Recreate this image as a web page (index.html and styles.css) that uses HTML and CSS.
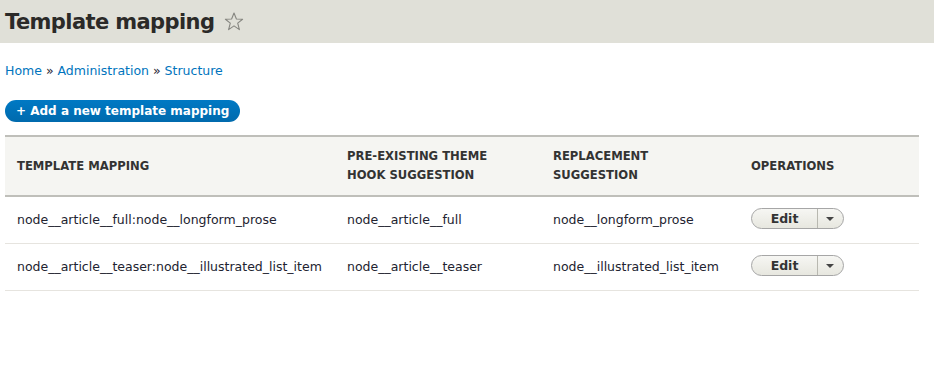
FILE: index.html
```html
<!DOCTYPE html>
<html lang="en">
<head>
    <meta charset="UTF-8">
    <title>Template mapping</title>
    <link rel="stylesheet" href="styles.css">
</head>
<body>
    <div class="page-header">
        <h1>Template mapping <span class="star">
            <svg width="20" height="19" viewBox="0 0 20 19"><polygon points="10,1 12.4,7 18.6,7.2 13.7,11.1 15.4,17.6 10,13.9 4.6,17.6 6.3,11.1 1.4,7.2 7.6,7" fill="none" stroke="#868680" stroke-width="1.1" stroke-linejoin="round"/></svg>
        </span></h1>
    </div>
    <div class="content">
        <div class="breadcrumb">
            <a href="#">Home</a> » <a href="#">Administration</a> » <a href="#">Structure</a>
        </div>
        <a class="action-button" href="#">+ Add a new template mapping</a>
        <table class="mapping-table">
            <thead>
                <tr>
                    <th class="col-1">Template mapping</th>
                    <th class="col-2">Pre-existing theme hook suggestion</th>
                    <th class="col-3">Replacement suggestion</th>
                    <th>Operations</th>
                </tr>
            </thead>
            <tbody>
                <tr>
                    <td>node__article__full:node__longform_prose</td>
                    <td>node__article__full</td>
                    <td>node__longform_prose</td>
                    <td>
                        <div class="dropbutton"><span class="main">Edit</span><span class="toggle"></span></div>
                    </td>
                </tr>
                <tr>
                    <td>node__article__teaser:node__illustrated_list_item</td>
                    <td>node__article__teaser</td>
                    <td>node__illustrated_list_item</td>
                    <td>
                        <div class="dropbutton"><span class="main">Edit</span><span class="toggle"></span></div>
                    </td>
                </tr>
            </tbody>
        </table>
    </div>
</body>
</html>
```

FILE: styles.css
```css
body {
    margin: 0;
    font-family: "DejaVu Sans", "Lucida Grande", sans-serif;
    font-size: 12.5px;
    color: #222330;
    background: #fff;
}
.page-header {
    background-color: #e0e0d8;
    height: 43px;
    padding: 0 5px;
    box-sizing: border-box;
}
.page-header h1 {
    margin: 0;
    font-size: 21px;
    letter-spacing: -0.6px;
    line-height: 45px;
    font-weight: bold;
    color: #2b2a28;
}
.star {
    display: inline-block;
    vertical-align: -2px;
    margin-left: 3px;
}
.content {
    padding: 0 5px;
}
.breadcrumb {
    margin-top: 20px;
    line-height: 16px;
    color: #222330;
}
.breadcrumb a {
    color: #0074bd;
    text-decoration: none;
}
.action-button {
    display: inline-block;
    margin-top: 21px;
    height: 22px;
    line-height: 22px;
    padding: 0 11px;
    border-radius: 11px;
    background: linear-gradient(#0079c4, #006aad);
    color: #fff;
    font-size: 12px;
    font-weight: bold;
    text-decoration: none;
    box-sizing: border-box;
}
.mapping-table {
    width: 914px;
    table-layout: fixed;
    border-collapse: collapse;
    margin-top: 13px;
}
.mapping-table th {
    background-color: #f5f5f2;
    border-top: 2px solid #bfbfba;
    border-bottom: 2px solid #bfbfba;
    text-align: left;
    text-transform: uppercase;
    font-size: 11.6px;
    font-weight: bold;
    line-height: 19px;
    padding: 5px 12px;
    height: 60px;
    box-sizing: border-box;
    color: #333;
}
.mapping-table th.col-1 {
    width: 330px;
}
.mapping-table th.col-2 {
    width: 206px;
}
.mapping-table th.col-3 {
    width: 198px;
}
.mapping-table td {
    padding: 0 12px;
    height: 47px;
    box-sizing: border-box;
    border-bottom: 1px solid #e6e4df;
    white-space: nowrap;
}
.dropbutton {
    display: inline-flex;
    height: 21px;
    margin-top: -4px;
    border: 1px solid #a6a6a6;
    border-radius: 11px;
    background: linear-gradient(#f6f6f3, #e7e7df);
    box-sizing: border-box;
    font-weight: bold;
    font-size: 12.5px;
    color: #333;
}
.dropbutton .main {
    width: 65px;
    text-align: center;
    line-height: 19px;
    border-right: 1px solid #b8b8b0;
}
.dropbutton .toggle {
    width: 25px;
    position: relative;
}
.dropbutton .toggle::after {
    content: "";
    position: absolute;
    left: 8px;
    top: 8px;
    border-left: 4px solid transparent;
    border-right: 4px solid transparent;
    border-top: 4px solid #444;
}
```
